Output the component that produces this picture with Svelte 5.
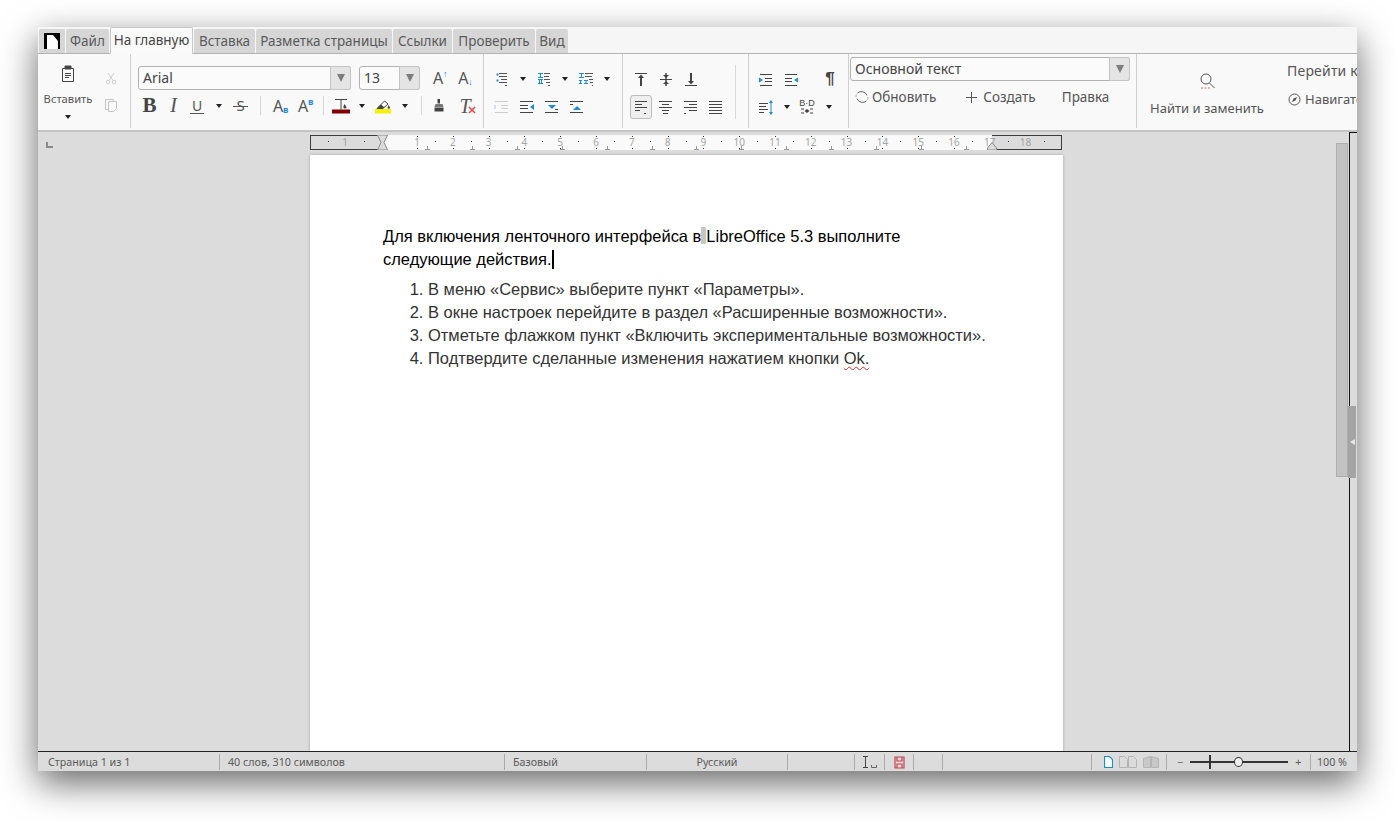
<script>
	const tabs = ['Файл', 'На главную', 'Вставка', 'Разметка страницы', 'Ссылки', 'Проверить', 'Вид'];
	const nums = Array.from({ length: 18 }, (_, i) => i + 1);
	const pos = (n) => 417 - 310 + (n - 1) * 35.8;
	const tabStops = Array.from({ length: 13 }, (_, i) => 427 - 310 + i * 44.9);
</script>

{#snippet arrow()}<i class="arr"></i>{/snippet}

{#snippet lines(rows, color = '#444')}
	<svg width="18" height="18" viewBox="0 0 18 18" stroke={color} stroke-width="1" fill="none">
		{#each rows as r, i}
			<path d="M{r[0]} {3.5 + i * 3}H{r[1]}" />
		{/each}
	</svg>
{/snippet}

<div class="screen">
	<div class="window">
		<div class="tabbar">
			<div class="tab logo">
				<svg width="16" height="16" viewBox="0 0 16 16"><rect width="16" height="16" fill="#000" /><path d="M3 2h6l5 6v8H3z" fill="#fff" /></svg>
			</div>
			{#each tabs as t, i}
				<div class="tab t{i}" class:active={i === 1}>{t}</div>
			{/each}
		</div>

		<div class="ribbon">
			<section class="grp g1">
				<div class="paste">
					<svg width="16" height="17" viewBox="0 0 16 17" fill="none" stroke="#444">
						<path d="M2.5 3.5h11v13h-11z" />
						<path d="M5 1h6v3H5z" fill="#444" />
						<path d="M5 8.5h6M5 10.5h6M5 12.5h4" />
					</svg>
					<span class="pl">Вставить</span>
					{@render arrow()}
				</div>
				<div class="cc">
					<svg width="12" height="14" viewBox="0 0 12 14" fill="none" stroke="#cfcfcf"><circle cx="3" cy="11" r="1.8" /><circle cx="9" cy="11" r="1.8" /><path d="M4 9.5 9 2M8 9.5 3 2" /></svg>
					<svg width="14" height="14" viewBox="0 0 14 14" fill="none" stroke="#c4c4c4"><path d="M1.5 1.5h8v10h-8z" /><path d="M4.500 3.500h8v7l-3 3h-5z" fill="#f9f9f9" /></svg>
				</div>
			</section>

			<section class="grp g2">
				<div class="fontrow">
					<div class="combo fname"><span>Arial</span><b class="drop"><i class="darr"></i></b></div>
					<div class="combo fsize"><span>13</span><b class="drop"><i class="darr"></i></b></div>
					<span class="ltr up">A<em>↑</em></span>
					<span class="ltr down">A<em>↓</em></span>
				</div>
				<div class="row fmt">
					<b class="bold">B</b>
					<span class="ital">I</span>
					<span class="und">U</span>
					{@render arrow()}
					<span class="strike">S</span>
					<u class="vs"></u>
					<span class="ltr sub">A<em>в</em></span>
					<span class="ltr sup">A<em>в</em></span>
					<u class="vs"></u>
					<svg width="18" height="18" viewBox="0 0 18 18"><path d="M3 2.500h12M9 2.500v10" stroke="#444" fill="none" /><path d="M12.500 7 14.500 10a1.600 1.600 0 1 1-3.200 0z" fill="#444" /><rect x="0" y="12.500" width="18" height="4" fill="#800000" /></svg>
					{@render arrow()}
					<svg width="18" height="18" viewBox="0 0 18 18"><path d="M3 11.500 10.500 4l3.500 3-5 4.500z" fill="#fff" stroke="#444" /><path d="M3 11.500 7 7.500l3 2.500-1 1.500z" fill="#444" /><path d="m14.500 8 1.500 2.500a1.200 1.200 0 1 1-2.400 0z" fill="#444" /><rect x="1" y="12" width="16" height="4.500" fill="#f4f000" /></svg>
					{@render arrow()}
					<u class="vs"></u>
					<svg width="12" height="13" viewBox="0 0 12 13"><path d="M4.500 0h2.500v4.500H4.500z" fill="#444" /><path d="M2.500 5h7l1 3h-9z" fill="#777" /><path d="M1.500 8.500h9v4h-9z" fill="#444" /></svg>
					<span class="clear">T<svg width="8" height="8" viewBox="0 0 8 8"><path d="m1 1 6 6M7 1 1 7" stroke="#e04b4b" stroke-width="1.600" /></svg></span>
				</div>
			</section>

			<section class="grp g3">
				<div class="row lists">
					<svg width="18" height="18" viewBox="0 0 18 18" fill="none"><path d="M3.500 4.500h2M3.500 10.500h2" stroke="#1e8bcd" stroke-width="2" /><path d="M6 3.500h8M6 6.500h8M8 9.500h6M6 12.500h8M12 15.500h2" stroke="#555" /></svg>
					{@render arrow()}
					<svg width="18" height="18" viewBox="0 0 18 18" fill="none"><path d="M3 3.500h5M5.500 4v3M3 7.500h5M3 9.500h5M4.500 10v3M6.500 10v3M3 13.500h5" stroke="#1e8bcd" /><path d="M9 3.500h6M9 6.500h5M9 9.500h6M11 12.500h4M13 15.500h2" stroke="#555" /></svg>
					{@render arrow()}
					<svg width="18" height="18" viewBox="0 0 18 18" fill="none"><path d="M2 3.500h5M4.500 4v3M2 7.500h5M2 10.500h3M3.500 11v2M2 13.500h3M7 10.500h4M9 11v2M7 13.500h4" stroke="#1e8bcd" /><path d="M8 3.500h8M8 6.500h7M12 9.500h4M13 12.500h3M15 15.500h1" stroke="#555" /></svg>
					{@render arrow()}
				</div>
				<div class="row lists2">
					<svg width="18" height="18" viewBox="0 0 18 18" fill="none" stroke="#cdcdcd"><path d="M2 3.500h13M8 7.500h7M8 10.500h7M2 14.500h13" /><path d="M2 7v4" stroke="#cfe0ec" stroke-width="2" /></svg>
					<svg width="18" height="18" viewBox="0 0 18 18" fill="none" stroke="#444"><path d="M2 3.500h13M2 7.500h8M2 10.500h8M2 14.500h13" /><path d="m16 6-4 3 4 3z" fill="#1e8bcd" stroke="none" /></svg>
					<svg width="18" height="18" viewBox="0 0 18 18" fill="none" stroke="#444"><path d="M2 3.500h13M2 14.500h13M12 11.500h3" /><path d="m5 7 4 4 4-4z" fill="#1e8bcd" stroke="none" /></svg>
					<svg width="18" height="18" viewBox="0 0 18 18" fill="none" stroke="#444"><path d="M2 3.500h13M2 14.500h13M2 6.500h3" /><path d="m5 12 4-4 4 4z" fill="#1e8bcd" stroke="none" /></svg>
				</div>
			</section>

			<section class="grp g4">
				<div class="row aligns">
					<svg width="18" height="18" viewBox="0 0 18 18"><path d="M3 3.500h12" stroke="#444" /><path d="M9 7v9" stroke="#444" stroke-width="2" /><path d="m6 8 3-3.500L12 8z" fill="#444" /></svg>
					<svg width="18" height="18" viewBox="0 0 18 18"><path d="M3 9.500h12" stroke="#444" /><path d="M9 3v13" stroke="#444" stroke-width="1.500" /><path d="m6 5 3 3 3-3zM6 14l3-3 3 3z" fill="#444" /></svg>
					<svg width="18" height="18" viewBox="0 0 18 18"><path d="M3 15.500h12" stroke="#444" /><path d="M9 3v9" stroke="#444" stroke-width="2" /><path d="m6 11 3 3.500 3-3.500z" fill="#444" /></svg>
				</div>
				<div class="row aligns">
					<span class="on">{@render lines([[3, 15], [3, 10], [3, 15], [3, 8], [12, 14]])}</span>
					{@render lines([[2, 15], [5, 12], [2, 15], [5, 12], [6, 11]])}
					{@render lines([[2, 15], [7, 15], [2, 15], [7, 15], [2, 4]])}
					{@render lines([[2, 15], [2, 15], [2, 15], [2, 15], [2, 15]])}
				</div>
				<u class="faint"></u>
			</section>

			<section class="grp g5">
				<div class="row spc1">
					<svg width="18" height="18" viewBox="0 0 18 18" fill="none"><path d="M3 4.500h12M8 8.500h7M8 11.500h7M3 15.500h12" stroke="#444" /><path d="M2 7.500v5l4-2.500z" fill="#1e8bcd" /></svg>
					<svg width="18" height="18" viewBox="0 0 18 18" fill="none"><path d="M3 4.500h12M3 8.500h7M3 11.500h7M3 15.500h12" stroke="#444" /><path d="M16 7.500v5l-4-2.500z" fill="#1e8bcd" /></svg>
					<span></span>
					<span class="pil">¶</span>
				</div>
				<div class="row spc2">
					<svg width="18" height="18" viewBox="0 0 18 18" fill="none"><path d="M2 5.500h9M2 8.500h7M2 11.500h9M2 14.500h5" stroke="#444" /><path d="M14 3v13" stroke="#1e8bcd" /><path d="m12 5 2-3 2 3zM12 14l2 3 2-3z" fill="#1e8bcd" /></svg>
					{@render arrow()}
					<span class="bd"><span>B·D</span><svg width="14" height="6" viewBox="0 0 14 6"><path d="M1 1h3M10 1h3M1 5h3M10 5h3" stroke="#444" /><path d="M7 1 4.500 3 7 5zM7 1l2.500 2L7 5z" fill="#444" /></svg></span>
					{@render arrow()}
				</div>
			</section>

			<section class="grp g6">
				<div class="combo stylebox"><span>Основной текст</span><b class="drop"><i class="darr"></i></b></div>
				<div class="styleacts">
					<span class="upd">
						<svg width="14" height="14" viewBox="0 0 14 14" fill="none" stroke="#666"><path d="M2.500 3a6 6 0 0 1 9.500 2.500M11.500 11A6 6 0 0 1 2 8.500" /><path d="M1 7a6 6 0 0 1 .5-2.500M13 7a6 6 0 0 1-.5 2.500" stroke="#aaa" /></svg>
						Обновить
					</span>
					<span class="new">
						<svg width="13" height="13" viewBox="0 0 13 13" stroke="#555"><path d="M6.500 1v11M1 6.500h11" /></svg>
						Создать
					</span>
					<span class="edit">Правка</span>
				</div>
			</section>

			<section class="g7">
				<div class="find">
					<svg width="18" height="18" viewBox="0 0 18 18" fill="none" stroke="#555"><circle cx="8" cy="7" r="5" /><path d="m11.500 11 5 5" /><path d="M3 16h9" stroke="#d96b6b" stroke-dasharray="2 1.500" /></svg>
					<span>Найти и заменить</span>
				</div>
				<div class="nav">
					<span class="goto">Перейти к</span>
					<span class="navi">
						<svg width="13" height="13" viewBox="0 0 13 13" fill="none" stroke="#555"><circle cx="6.500" cy="6.500" r="5.500" /><path d="M9 4 7.500 7.500 4 9l1.500-3.500z" fill="#555" stroke="none" /></svg>
						Навигатор
					</span>
				</div>
			</section>
		</div>

		<div class="work">
			<div class="main">
				<div class="rulerrow">
					<svg class="corner" width="7" height="6" viewBox="0 0 7 6"><path d="M1 0v5h6" stroke="#8a8a8a" stroke-width="2" fill="none" /></svg>
					<div class="ruler">
						<div class="mgn left"></div>
						<div class="body"></div>
						<div class="mgn right"></div>
						<span class="rn" style="left:{35}px">1</span>
						<i class="rd" style="left:{18}px"></i>
						<i class="rd" style="left:{54}px"></i>
						{#each nums as n}
							<span class="rn" style="left:{pos(n)}px">{n}</span>
							<i class="rd" style="left:{pos(n) + 17.900}px"></i>
						{/each}
						{#each nums.slice(0, 16) as n}
							<i class="rt" style="left:{pos(n)}px"></i>
							<i class="rb" style="left:{pos(n)}px"></i>
						{/each}
						{#each tabStops as x}
							<i class="stop" style="left:{x}px"></i>
						{/each}
						<svg class="indent" width="11" height="15" viewBox="0 0 11 15"><path d="M.5 0h10L7 7.500 10.500 15H.5L4 7.500z" fill="#dcdcdc" stroke="#8a8a8a" /></svg>
						<svg class="rindent" width="10" height="8" viewBox="0 0 10 8"><path d="M5 .5 9.500 6v2H.5V6z" fill="#dcdcdc" stroke="#8a8a8a" /></svg>
					</div>
				</div>
				<div class="page">
					<p class="intro">Для включения ленточного интерфейса в<span class="field"> </span>LibreOffice 5.3 выполните<br />следующие действия.<i class="caret"></i></p>
					<ol>
						<li>В меню «Сервис» выберите пункт «Параметры».</li>
						<li>В окне настроек перейдите в раздел «Расширенные возможности».</li>
						<li>Отметьте флажком пункт «Включить экспериментальные возможности».</li>
						<li>Подтвердите сделанные изменения нажатием кнопки <span class="sp">Ok.</span></li>
					</ol>
				</div>
			</div>
			<div class="scroll"><div class="thumb"></div></div>
			<div class="side">
				<div class="handle"><i></i></div>
			</div>
		</div>

		<div class="status">
			<div>Страница 1 из 1</div>
			<div>40 слов, 310 символов</div>
			<div>Базовый</div>
			<div class="ctr">Русский</div>
			<div></div>
			<div class="ctr">
				<svg width="17" height="14" viewBox="0 0 17 14" fill="none" stroke="#444"><path d="M2 1.500h5M2 12.500h5M4.500 2v10" /><path d="M10.500 10v2.500h5V10" stroke="#666" /></svg>
			</div>
			<div class="ctr">
				<svg width="11" height="13" viewBox="0 0 11 13" fill="none" stroke="#c8404f" stroke-width="1.200"><path d="M1 1h9v11H1z" /><path d="M3 1v4h5V1M3 12V8h5v4" /></svg>
			</div>
			<div></div>
			<div></div>
			<div class="views">
				<svg width="9" height="12" viewBox="0 0 9 12"><path d="M.5.500h5l3 3v8h-8z" fill="#fff" stroke="#1e8bcd" stroke-width="1.200" /></svg>
				<svg width="18" height="12" viewBox="0 0 18 12" fill="none" stroke="#b4b4b4"><path d="M.5.500h5l3 3v8h-8zM9.500.500h5l3 3v8h-8z" /></svg>
				<svg width="16" height="12" viewBox="0 0 16 12" fill="#c8c8c8" stroke="#b4b4b4"><path d="M.5 2.500 7.500.500v11h-7zM15.500 2.500 8.500.500v11h7z" /></svg>
			</div>
			<div class="zoom">
				<span>−</span>
				<div class="slider"><i class="tick"></i><i class="knob"></i></div>
				<span>+</span>
			</div>
			<div class="pct">100 %</div>
		</div>
	</div>
</div>

<style>
	:global(body) {
		background: #fff;
	}
	.screen {
		box-sizing: border-box;
		width: 1396px;
		height: 821px;
		padding: 27px 39px 50px 38px;
		overflow: hidden;
		font-family: 'Noto Sans', sans-serif;
		color: #555;
	}
	.window {
		height: 744px;
		display: flex;
		flex-direction: column;
		background: #dcdcdc;
		box-shadow: 0 12px 34px rgba(0, 0, 0, 0.6);
	}

	/* tabs */
	.tabbar {
		flex: 0 0 27px;
		box-sizing: border-box;
		display: flex;
		align-items: flex-end;
		padding-left: 1px;
		background: #f6f6f6;
		border-bottom: 1px solid #b4b4b4;
	}
	.tab {
		box-sizing: border-box;
		height: 24px;
		margin-right: 1px;
		background: #d6d6d6;
		border-radius: 2px 2px 0 0;
		font-size: 13.500px;
		line-height: 25px;
		text-align: center;
		white-space: nowrap;
		color: #5a5a5a;
	}
	.logo {
		width: 26px;
		display: flex;
		align-items: center;
		justify-content: center;
		margin-right: 1px;
	}
	.t0 { width: 43px; }
	.t1 { width: 83px; }
	.t2 { width: 61px; margin-left: 1px; }
	.t3 { width: 136px; }
	.t4 { width: 59px; }
	.t5 { width: 82px; }
	.t6 { width: 32px; }
	.active {
		height: 27px;
		margin-bottom: -1px;
		background: #fafafa;
		color: #444;
		border: 1px solid #c8c8c8;
		border-bottom: none;
		margin-right: 0;
		line-height: 25px;
	}

	/* ribbon */
	.ribbon {
		flex: 0 0 78px;
		box-sizing: border-box;
		display: flex;
		background: #f9f9f9;
		border-bottom: 2px solid #c4c4c4;
		padding-bottom: 2px;
		overflow: hidden;
	}
	.grp {
		box-sizing: border-box;
		position: relative;
		border-right: 1px solid #cfcfcf;
		flex: none;
	}
	.row {
		display: grid;
		align-items: center;
		justify-items: center;
		height: 25px;
	}
	.arr {
		display: block;
		width: 0;
		height: 0;
		border: 3.500px solid transparent;
		border-top: 4px solid #222;
		border-bottom: none;
	}
	.g1 {
		width: 93px;
		display: flex;
		padding: 11px 0 0 6px;
	}
	.paste {
		width: 48px;
		display: flex;
		flex-direction: column;
		align-items: center;
	}
	.pl {
		margin-top: 9px;
		font-size: 11.200px;
		line-height: 16px;
	}
	.paste .arr {
		margin-top: 8px;
	}
	.cc {
		width: 38px;
		display: flex;
		flex-direction: column;
		align-items: center;
		gap: 13px;
		padding-top: 6px;
	}
	.g2 {
		width: 353px;
		padding: 12px 0 0 7px;
	}
	.fontrow {
		display: flex;
		align-items: center;
		height: 24px;
		margin-bottom: 3px;
	}
	.combo {
		box-sizing: border-box;
		display: flex;
		align-items: center;
		border: 1px solid #b2b2b2;
		border-radius: 3px;
		background: #fbfbfb;
		font-size: 14px;
		color: #444;
	}
	.combo span {
		flex: 1;
		padding: 0 0 2px 4px;
		white-space: nowrap;
	}
	.drop {
		align-self: stretch;
		width: 19px;
		margin: -1px -1px -1px 0;
		display: flex;
		align-items: center;
		justify-content: center;
		background: #e4e4e4;
		border: 1px solid #c4c4c4;
		border-radius: 0 3px 3px 0;
	}
	.darr {
		width: 0;
		height: 0;
		border: 4px solid transparent;
		border-top: 8px solid #7c7c7c;
		border-bottom: none;
	}
	.fname {
		width: 213px;
		height: 24px;
	}
	.fsize {
		width: 61px;
		height: 24px;
		margin-left: 8px;
	}
	.ltr {
		position: relative;
		font-size: 16px;
		line-height: 1;
		font-weight: 400;
		color: #555;
	}
	.ltr em {
		position: absolute;
		font-style: normal;
		font-size: 9px;
		line-height: 1;
		color: #1e8bcd;
		font-weight: 700;
	}
	.up { margin-left: 13px; }
	.down { margin-left: 15px; }
	.up em { left: 10px; top: -1px; }
	.down em { left: 10px; top: 7px; }
	.sub em { left: 10px; top: 7px; }
	.sup em { left: 10px; top: -1px; }
	.sub, .sup { margin-right: 4px; }
	.fmt {
		grid-template-columns: 23px 25px 22px 22px 21px 18px 22px 28px 8px 28px 14px 28px 16px 16px 20px 32px;
	}
	.bold {
		font: bold 21px/1 'Liberation Serif', serif;
		color: #444;
	}
	.ital {
		font: italic 21px/1 'Liberation Serif', serif;
		color: #555;
	}
	.und {
		font-size: 14px;
		line-height: 15px;
		border-bottom: 1px solid #555;
		padding: 0 2px;
	}
	.strike {
		position: relative;
		font-size: 15px;
		line-height: 1;
	}
	.strike::after {
		content: '';
		position: absolute;
		left: -3px;
		right: -3px;
		top: 8px;
		height: 1px;
		background: #555;
	}
	.vs {
		display: block;
		width: 1px;
		height: 19px;
		background: #d6d6d6;
	}
	.clear {
		position: relative;
		font: italic 20px/1 'Liberation Serif', serif;
		color: #555;
	}
	.clear svg {
		position: absolute;
		left: 9px;
		top: 10px;
	}
	.g3 {
		width: 139px;
		padding: 12px 0 0 7px;
	}
	.lists {
		grid-template-columns: repeat(6, 21px);
		margin-bottom: 3px;
	}
	.lists2 {
		grid-template-columns: repeat(4, 25px);
		margin-left: -2px;
		justify-content: start;
	}
	.g4 {
		width: 126px;
		padding: 12px 0 0 5px;
	}
	.aligns {
		grid-template-columns: repeat(4, 25px);
		justify-content: start;
		margin-bottom: 3px;
	}
	.on {
		width: 22px;
		height: 24px;
		box-sizing: border-box;
		display: flex;
		align-items: center;
		justify-content: center;
		background: #efefef;
		border: 1px solid #bcbcbc;
		border-radius: 3px;
	}
	.faint {
		position: absolute;
		left: 112px;
		top: 11px;
		bottom: 9px;
		width: 1px;
		background: #d8d8d8;
	}
	.g5 {
		width: 100px;
		padding: 12px 0 0 6px;
	}
	.spc1 {
		grid-template-columns: 22px 28px 14px 22px;
		margin-bottom: 3px;
	}
	.spc2 {
		grid-template-columns: 22px 20px 20px 24px;
	}
	.pil {
		font: bold 17px/22px 'Liberation Sans', sans-serif;
		color: #444;
	}
	.bd {
		display: flex;
		flex-direction: column;
		align-items: center;
		font: 400 9px/9px 'Liberation Sans', sans-serif;
		color: #444;
	}
	.g6 {
		width: 288px;
		padding: 3px 0 0 1px;
	}
	.stylebox {
		width: 280px;
		height: 24px;
	}
	.styleacts {
		margin-top: 6px;
		display: flex;
		align-items: center;
		height: 20px;
		font-size: 13.500px;
		white-space: nowrap;
	}
	.styleacts span {
		display: flex;
		align-items: center;
		gap: 3px;
	}
	.upd { margin-left: 5px; }
	.styleacts .new { margin-left: 29px; gap: 5px; }
	.edit { margin-left: 26px; }
	.g7 {
		flex: 1;
		display: flex;
		min-width: 0;
		font-size: 13px;
	}
	.find {
		margin-left: 13px;
		width: 114px;
		flex: none;
		display: flex;
		flex-direction: column;
		align-items: center;
		white-space: nowrap;
		padding-top: 18px;
	}
	.find span {
		margin-top: 9px;
	}
	.nav {
		margin-left: 23px;
		display: flex;
		flex-direction: column;
		white-space: nowrap;
		padding-top: 7px;
	}
	.goto {
		font-size: 14px;
		letter-spacing: 0.2px;
	}
	.navi {
		display: flex;
		align-items: center;
		gap: 4px;
		margin: 10px 0 0 1px;
	}

	/* document area */
	.work {
		flex: 1;
		min-height: 0;
		display: flex;
		background: #dcdcdc;
		overflow: hidden;
	}
	.main {
		width: 1298px;
		flex: none;
		display: flex;
		flex-direction: column;
	}
	.rulerrow {
		flex: none;
		display: flex;
		padding: 3px 0 0 8px;
		height: 23px;
		box-sizing: border-box;
	}
	.corner {
		margin-top: 7px;
	}
	.ruler {
		position: relative;
		width: 752px;
		height: 15px;
		margin-left: 257px;
		display: flex;
		background: #fafafa;
		font: 10px 'Noto Sans', sans-serif;
		color: #a4a4a4;
	}
	.mgn {
		box-sizing: border-box;
		width: 72px;
		background: #dcdcdc;
		border: 1px solid #3c3c3c;
	}
	.body {
		flex: 1;
	}
	.left { border-right: none; }
	.right { border-left: none; width: 70px; }
	.rn {
		position: absolute;
		top: 0;
		transform: translateX(-50%);
		line-height: 14px;
	}
	.rd {
		position: absolute;
		top: 6px;
		width: 1px;
		height: 1px;
		background: #333;
	}
	.rt, .rb {
		position: absolute;
		top: 1px;
		width: 1px;
		height: 1px;
		background: #333;
	}
	.rb {
		top: 13px;
	}
	.stop {
		position: absolute;
		top: 11px;
		width: 5px;
		height: 3px;
		margin-left: -2px;
		border-bottom: 1px solid #9a9a9a;
		background: linear-gradient(#9a9a9a, #9a9a9a) center / 1px 100% no-repeat;
	}
	.indent {
		position: absolute;
		left: 67px;
		top: 0;
	}
	.rindent {
		position: absolute;
		left: 677px;
		top: 7px;
	}
	.page {
		flex: 1;
		box-sizing: border-box;
		width: 753px;
		margin-left: 272px;
		background: #fff;
		padding: 70px 0 0 73px;
		box-shadow: 0 0 3px rgba(0, 0, 0, 0.25);
		font: 16.480px/22.700px 'Liberation Sans', sans-serif;
		color: #000;
		white-space: nowrap;
	}
	.intro {
		margin: 0 0 8px;
	}
	.field {
		display: inline-block;
		width: 5px;
		background: #c6c6c6;
		line-height: 17px;
		height: 17px;
		vertical-align: -2px;
	}
	.caret {
		display: inline-block;
		width: 2px;
		height: 19px;
		background: #000;
		vertical-align: -4px;
	}
	ol {
		margin: 0;
		padding-left: 45px;
		color: #333;
	}
	.sp {
		text-decoration: underline wavy #d03030 1px;
		text-underline-offset: 2px;
	}
	.scroll {
		width: 13px;
		flex: none;
		padding-top: 11px;
		box-sizing: border-box;
	}
	.thumb {
		box-sizing: border-box;
		width: 12px;
		height: 334px;
		background: #c2c2c2;
		border: 1px solid #aeaeae;
	}
	.side {
		position: relative;
		flex: 1;
		border-left: 1px solid #111;
		border-top: 1px solid #111;
	}
	.handle {
		position: absolute;
		left: -2px;
		top: 273px;
		width: 8px;
		height: 72px;
		display: flex;
		align-items: center;
		justify-content: center;
		background: #a4a4a4;
	}
	.handle i {
		width: 0;
		height: 0;
		border: 3.500px solid transparent;
		border-right: 5px solid #e8e8e8;
		border-left: none;
	}

	/* status bar */
	.status {
		flex: 0 0 20px;
		box-sizing: border-box;
		display: grid;
		grid-template-columns: 182px 285px 142px 141px 67px 30px 29px 29px 149px 75px 144px 1fr;
		background: #dcdcdc;
		border-top: 1px solid #222;
		font-size: 10.700px;
		line-height: 19px;
		color: #5a5a5a;
	}
	.status > div {
		box-sizing: border-box;
		border-right: 1px solid #aaa;
		margin: 2px 0 1px;
		line-height: 16px;
		padding-left: 8px;
		white-space: nowrap;
	}
	.status > div:first-child {
		padding-left: 10px;
	}
	.status .ctr {
		padding: 0;
		display: flex;
		align-items: center;
		justify-content: center;
	}
	.status .views {
		padding-left: 12px;
		display: flex;
		align-items: center;
		gap: 6px;
	}
	.status .zoom {
		padding-left: 10px;
		display: flex;
		align-items: center;
		gap: 7px;
	}
	.slider {
		position: relative;
		width: 98px;
		height: 2px;
		background: #333;
	}
	.tick {
		position: absolute;
		left: 19px;
		top: -6px;
		width: 2px;
		height: 14px;
		background: #333;
	}
	.knob {
		position: absolute;
		left: 44px;
		top: -4px;
		box-sizing: border-box;
		width: 9px;
		height: 10px;
		border: 1.500px solid #333;
		border-radius: 50%;
		background: #eee;
	}
	.status .pct {
		border: none;
		padding-left: 6px;
	}
</style>
